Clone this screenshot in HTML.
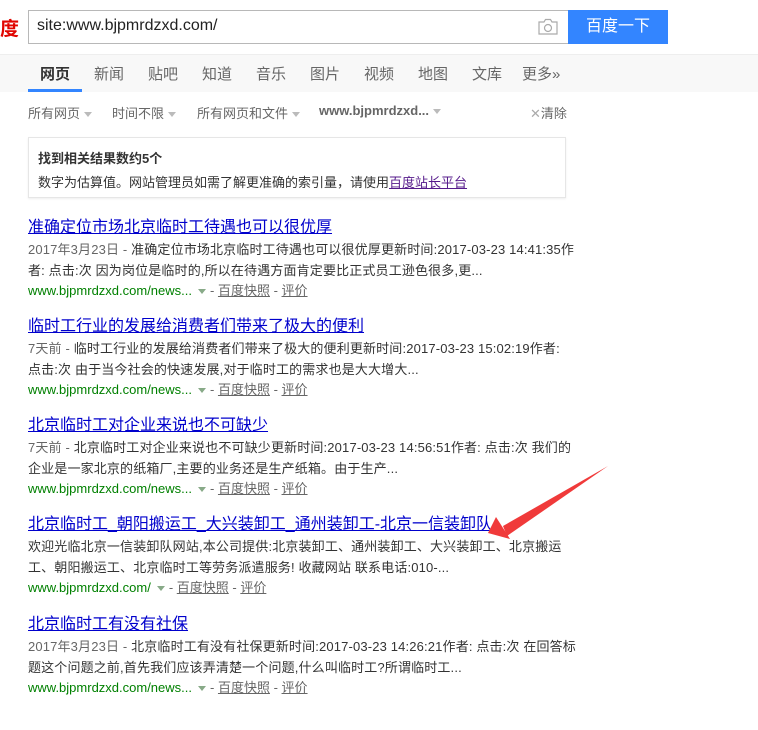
<!DOCTYPE html>
<html><head><meta charset="utf-8"><style>
*{margin:0;padding:0;box-sizing:border-box}
body{width:758px;height:730px;background:#fff;font-family:Arial,"Liberation Sans","Noto Sans CJK SC",sans-serif;font-size:13px;color:#333;position:relative;overflow:hidden}
.abs{position:absolute}
.logo{left:0;top:14px;color:#e10601;font-size:19px;font-weight:bold}
.sbox{left:28px;top:10px;width:540px;height:34px;border:1px solid #b8b8b8;border-right:none;font-size:16px;color:#222;padding:6px 0 0 8px}
.btn{left:568px;top:10px;width:100px;height:34px;background:#3385ff;color:#fff;font-size:16px;text-align:center;line-height:34px}
.nav{left:0;top:54px;width:758px;height:38px;background:#f8f8f8;border-top:1px solid #eee}
.nav span{position:absolute;top:8px;font-size:15px;color:#666}
.ul{left:28px;top:89px;width:54px;height:3px;background:#3385ff}
.flt span{position:absolute;top:103px;color:#666;font-size:13px}
.tri{display:inline-block;width:0;height:0;border-left:4px solid transparent;border-right:4px solid transparent;border-top:5px solid #bbb;vertical-align:middle;margin-left:4px}
.box{left:28px;top:137px;width:538px;height:61px;border:1px solid #e6e6e6;box-shadow:0 1px 2px #eee;padding:10px 0 0 9px}
.r{position:absolute;left:28px;width:545px}
.r a.t{font-size:16px;line-height:20px;color:#0000cc;text-decoration:underline;display:block;white-space:nowrap}
.r p{line-height:20.5px;margin-top:2px;color:#333;white-space:nowrap;letter-spacing:0.15px}
.g{color:#666}
.u{color:#008000;line-height:20px}
.u a{color:#666;text-decoration:underline}
.u .tri{border-top-color:#8a8;margin:0 4px 0 6px}
</style></head><body>
<div class="abs logo">度</div>
<div class="abs sbox">site:www.bjpmrdzxd.com/</div>
<svg class="abs" style="left:538px;top:18px" width="20" height="18" viewBox="0 0 20 18"><path d="M1 4h5l1.5-2.5h5L14 4h5v12H1z" fill="none" stroke="#aaa" stroke-width="1.2"/><circle cx="10" cy="10" r="3.5" fill="none" stroke="#aaa" stroke-width="1.2"/></svg>
<div class="abs btn">百度一下</div>
<div class="abs nav">
<span style="left:40px;color:#333;font-weight:bold">网页</span><span style="left:94px">新闻</span><span style="left:148px">贴吧</span><span style="left:202px">知道</span><span style="left:256px">音乐</span><span style="left:310px">图片</span><span style="left:364px">视频</span><span style="left:418px">地图</span><span style="left:472px">文库</span><span style="left:522px">更多»</span>
</div>
<div class="abs ul"></div>
<div class="flt">
<span style="left:28px">所有网页<i class="tri"></i></span>
<span style="left:112px">时间不限<i class="tri"></i></span>
<span style="left:197px">所有网页和文件<i class="tri"></i></span>
<span style="left:319px;font-weight:bold">www.bjpmrdzxd...<i class="tri"></i></span>
<span style="left:530px"><span style="position:static;color:#aaa">✕</span>清除</span>
</div>
<div class="abs box"><div style="font-weight:bold;color:#333">找到相关结果数约5个</div><div style="margin-top:5px">数字为估算值。网站管理员如需了解更准确的索引量，请使用<a style="color:#551a8b;text-decoration:underline">百度站长平台</a></div></div>

<div class="r" style="top:218px"><a class="t">准确定位市场北京临时工待遇也可以很优厚</a><p><span class="g">2017年3月23日 - </span>准确定位市场北京临时工待遇也可以很优厚更新时间:2017-03-23 14:41:35作<br>者: 点击:次 因为岗位是临时的,所以在待遇方面肯定要比正式员工逊色很多,更...</p><div class="u">www.bjpmrdzxd.com/news...<i class="tri"></i><span class="g">- </span><a>百度快照</a><span class="g"> - </span><a>评价</a></div></div>

<div class="r" style="top:317px"><a class="t">临时工行业的发展给消费者们带来了极大的便利</a><p><span class="g">7天前 - </span>临时工行业的发展给消费者们带来了极大的便利更新时间:2017-03-23 15:02:19作者:<br>点击:次 由于当今社会的快速发展,对于临时工的需求也是大大增大...</p><div class="u">www.bjpmrdzxd.com/news...<i class="tri"></i><span class="g">- </span><a>百度快照</a><span class="g"> - </span><a>评价</a></div></div>

<div class="r" style="top:416px"><a class="t">北京临时工对企业来说也不可缺少</a><p><span class="g">7天前 - </span>北京临时工对企业来说也不可缺少更新时间:2017-03-23 14:56:51作者: 点击:次 我们的<br>企业是一家北京的纸箱厂,主要的业务还是生产纸箱。由于生产...</p><div class="u">www.bjpmrdzxd.com/news...<i class="tri"></i><span class="g">- </span><a>百度快照</a><span class="g"> - </span><a>评价</a></div></div>

<div class="r" style="top:515px"><a class="t">北京临时工_朝阳搬运工_大兴装卸工_通州装卸工-北京一信装卸队</a><p>欢迎光临北京一信装卸队网站,本公司提供:北京装卸工、通州装卸工、大兴装卸工、北京搬运<br>工、朝阳搬运工、北京临时工等劳务派遣服务! 收藏网站 联系电话:010-...</p><div class="u">www.bjpmrdzxd.com/<i class="tri"></i><span class="g">- </span><a>百度快照</a><span class="g"> - </span><a>评价</a></div></div>

<div class="r" style="top:615px"><a class="t">北京临时工有没有社保</a><p><span class="g">2017年3月23日 - </span>北京临时工有没有社保更新时间:2017-03-23 14:26:21作者: 点击:次 在回答标<br>题这个问题之前,首先我们应该弄清楚一个问题,什么叫临时工?所谓临时工...</p><div class="u">www.bjpmrdzxd.com/news...<i class="tri"></i><span class="g">- </span><a>百度快照</a><span class="g"> - </span><a>评价</a></div></div>

<svg class="abs" style="left:0;top:0" width="758" height="730"><path d="M608 466 L503 526 L507 536 Z" fill="#f03a3a"/><path d="M488 533 L496 517 L510 539 Z" fill="#f03a3a"/></svg>
</body></html>
